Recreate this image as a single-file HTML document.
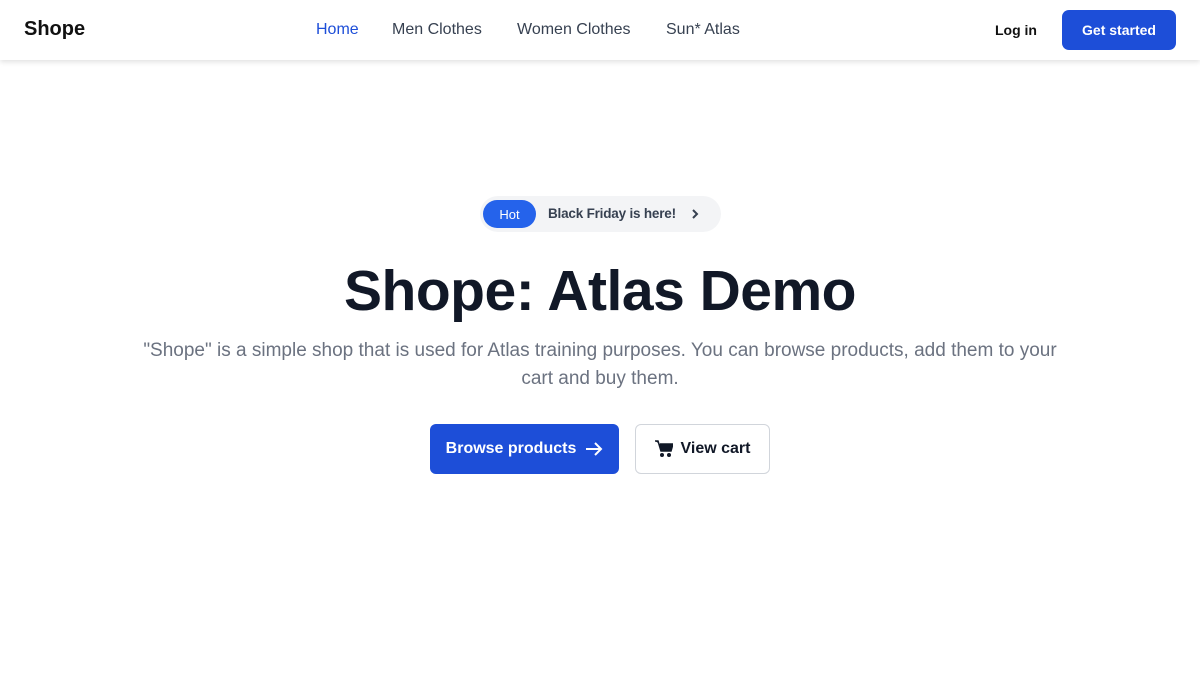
<!DOCTYPE html>
<html><head><meta charset="utf-8"><style>
*{margin:0;padding:0;box-sizing:border-box}
body{width:1200px;height:682px;background:#fff;font-family:"Liberation Sans","DejaVu Sans",sans-serif;position:relative;overflow:hidden}
.nav{position:absolute;left:0;top:0;width:1200px;height:60px;background:#fff;box-shadow:0 2px 5px rgba(0,0,0,.12)}
.a{position:absolute;white-space:nowrap}
.logo{left:24px;top:18px;font-size:20px;font-weight:bold;color:#111}
.nl{top:21px;font-size:16px;color:#374151}
.btn1{left:1062px;top:10px;width:114px;height:40px;background:#1d4ed8;color:#fff;border-radius:7px;font-size:14px;font-weight:bold;display:flex;align-items:center;justify-content:center}
.pill{left:480px;top:196px;width:241px;height:36px;background:#f3f4f6;border-radius:18px}
.hot{left:483px;top:200px;width:53px;height:28px;background:#2563eb;color:#fff;border-radius:14px;font-size:13px;display:flex;align-items:center;justify-content:center}
h1{position:absolute;left:0;width:1200px;top:258px;text-align:center;font-size:57px;font-weight:bold;color:#111827;letter-spacing:-0.5px}
.p{left:130px;width:940px;top:337px;text-align:center;font-size:19px;line-height:28px;color:#6b7280;white-space:normal}
.b1{left:430px;top:424px;width:189px;height:50px;background:#1d4ed8;border-radius:6px;color:#fff;font-size:16px;font-weight:bold;display:flex;align-items:center;justify-content:center;gap:9px}
.b2{left:635px;top:424px;width:135px;height:50px;border:1px solid #d1d5db;border-radius:6px;color:#111827;font-size:16px;font-weight:bold;display:flex;align-items:center;justify-content:center;gap:8px}
</style></head><body>
<div class="nav">
<div class="a logo">Shope</div>
<div class="a nl" style="left:316px;color:#1d4ed8">Home</div>
<div class="a nl" style="left:392px">Men Clothes</div>
<div class="a nl" style="left:517px">Women Clothes</div>
<div class="a nl" style="left:666px">Sun* Atlas</div>
<div class="a nl" style="left:995px;top:22px;font-size:14px;font-weight:bold;color:#111">Log in</div>
<div class="a btn1">Get started</div>
</div>
<div class="a pill"></div>
<div class="a hot">Hot</div>
<div class="a" style="left:548px;top:206px;font-size:13.5px;font-weight:bold;color:#374151;letter-spacing:-0.2px">Black Friday is here!</div>
<svg class="a" style="left:689px;top:207px" width="12" height="14" viewBox="0 0 12 14"><path d="M4 3l4 4-4 4" fill="none" stroke="#374151" stroke-width="2"/></svg>
<h1>Shope: Atlas Demo</h1>
<div class="a p">"Shope" is a simple shop that is used for Atlas training purposes. You can browse products, add them to your cart and buy them.</div>
<div class="a b1">Browse products <svg width="18" height="16" viewBox="0 0 18 16"><path d="M1 8h15M10 2l6 6-6 6" fill="none" stroke="#fff" stroke-width="2"/></svg></div>
<div class="a b2"><svg width="18" height="18" viewBox="0 0 18 18"><path d="M0 1h3l3 10h10l2-7H5" fill="#111827" stroke="#111827" stroke-width="1.5"/><circle cx="7" cy="15" r="2" fill="#111827"/><circle cx="14" cy="15" r="2" fill="#111827"/></svg>View cart</div>
</body></html>
